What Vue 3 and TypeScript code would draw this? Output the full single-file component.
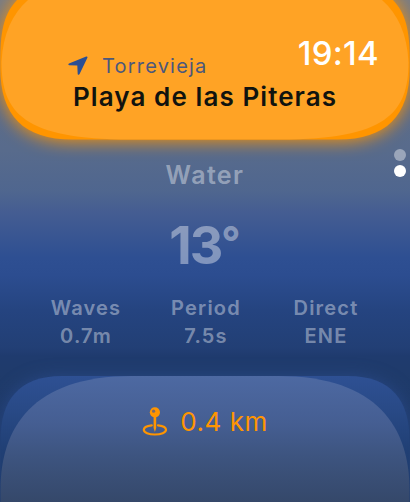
<script setup lang="ts">
interface Metric {
  label: string
  value: string
}

const metrics: Metric[] = [
  { label: 'Waves', value: '0.7m' },
  { label: 'Period', value: '7.5s' },
  { label: 'Direct', value: 'ENE' },
]
</script>

<template>
  <main class="watch">
    <header class="place">
      <svg class="card" viewBox="0 0 410 140" width="410" height="140" aria-hidden="true">
        <path class="card-back" d="M25-8 17 0C5 13 .3 28 .3 60V68C.3 116 24 139.500 72 139.500H338C386 139.500 409.700 116 409.700 68V60C409.700 28 405 13 393 0L385-8Z" />
        <path class="card-front" d="M38-8 28 0C12 14 3 34 1.500 62C1.500 113 24 139.500 130 139.500H280C386 139.500 408.500 113 408.500 62C407 34 398 14 382 0L372-8Z" />
      </svg>
      <div class="place-text">
        <div class="town">
          <svg class="arrow" viewBox="0 0 20 20" width="20" height="20" aria-hidden="true">
            <path d="M18.200 .5 1 7.400C-.1 7.900.1 9.100 1.200 9.200L9.300 9.600 9.700 17.900C9.800 19 11.100 19.200 11.600 18.100L19.400 1.800C19.800.9 19.100.1 18.200.5Z" />
          </svg>
          <span class="town-name">Torrevieja</span>
        </div>
        <h1 class="beach">Playa de las Piteras</h1>
      </div>
      <time class="clock">19:14</time>
    </header>

    <section class="water">
      <h2 class="title">Water</h2>
      <p class="temp">13<span class="degree">°</span></p>
      <dl class="metrics">
        <div v-for="m in metrics" :key="m.label" class="metric">
          <dt>{{ m.label }}</dt>
          <dd>{{ m.value }}</dd>
        </div>
      </dl>
    </section>

    <footer class="distance">
      <svg class="card sea" viewBox="0 0 410 126" width="410" height="126" aria-hidden="true">
        <defs>
          <linearGradient id="seaBack" gradientUnits="userSpaceOnUse" x1="0" y1="0" x2="0" y2="126">
            <stop offset="0" stop-color="#2e5093" />
            <stop offset=".25" stop-color="#294a87" />
            <stop offset=".6" stop-color="#203f74" />
            <stop offset="1" stop-color="#1e3a69" />
          </linearGradient>
          <linearGradient id="seaFront" gradientUnits="userSpaceOnUse" x1="0" y1="0" x2="0" y2="126">
            <stop offset="0" stop-color="#4d69a2" />
            <stop offset=".38" stop-color="#455e92" />
            <stop offset=".64" stop-color="#3d547f" />
            <stop offset="1" stop-color="#35486a" />
          </linearGradient>
        </defs>
        <path class="sea-back" fill="url(#seaBack)" d="M.5 140V64C.5 25 18 0 62 0H348C392 0 409.500 25 409.500 64V140Z" />
        <path fill="url(#seaFront)" d="M.5 140V114C.5 52 32 0 132 0H278C378 0 409.500 52 409.500 114V140Z" />
      </svg>
      <div class="distance-row">
        <svg class="pin" viewBox="0 0 26 30" width="26" height="30" aria-hidden="true">
          <path class="ring" d="M9.800 18.400C5.200 18.900 1.800 20.600 1.800 22.800C1.800 25.500 6.700 27.500 12.900 27.500S24 25.500 24 22.800C24 20.600 20.600 18.900 16 18.400" />
          <path class="fill" d="M11.600 9H14.200V21L12.900 25L11.600 21Z" />
          <circle class="fill" cx="12.900" cy="5.300" r="5.100" />
          <circle class="shine" cx="11.600" cy="4.200" r="1.600" />
        </svg>
        <span class="km">0.4 km</span>
      </div>
    </footer>

    <nav class="pages">
      <i class="dot"></i>
      <i class="dot active"></i>
    </nav>
  </main>
</template>

<style>
body {
  margin: 0;
  overflow: hidden;
}
</style>

<style scoped>
.watch {
  position: relative;
  display: flex;
  flex-direction: column;
  width: 410px;
  height: 502px;
  overflow: hidden;
  font-family: Inter, "Liberation Sans", sans-serif;
  background: linear-gradient(#777c86 0, #5b6c8b 110px, #586b8c 150px, #4f668f 192px, #455d92 212px, #2e4f92 258px, #2c4d90 275px, #254480 310px, #223f75 348px, #1f3b6e 356px, #1f3b6b 376px, #1d3867 502px);
}

.place {
  position: relative;
  z-index: 1;
  box-sizing: border-box;
  display: flex;
  height: 140px;
  padding-left: 68px;
}

.card {
  position: absolute;
  z-index: -1;
  top: 0;
  left: 0;
  overflow: visible;
}

.card-back {
  fill: #ff9500;
  filter: drop-shadow(0 1px 9px #ff9500);
}

.card-front {
  fill: #ffa325;
}

.sea-back {
  filter: drop-shadow(0 0 8px #2d4f9299);
}

.place-text {
  flex: 1;
  padding-top: 54px;
}

.town {
  display: flex;
  align-items: center;
  gap: 14px;
  height: 24px;
}

.arrow {
  fill: #2b4f94;
}

.town-name {
  font-size: 20px;
  line-height: 24px;
  letter-spacing: 1.2px;
  color: #4c587c;
}

.beach {
  margin: 3px 0 0 5px;
  font-size: 26px;
  line-height: 31px;
  font-weight: 600;
  letter-spacing: 1.08px;
  white-space: nowrap;
  color: #11130f;
}

.clock {
  position: absolute;
  right: 31px;
  top: 33px;
  font-size: 33px;
  line-height: 40px;
  font-weight: 500;
  letter-spacing: 0.3px;
  color: #fff;
}

.water {
  display: flex;
  flex-direction: column;
  align-items: center;
  height: 236px;
  color: #ffffff66;
}

.title {
  margin: 20px 0 0;
  font-size: 25px;
  line-height: 30px;
  font-weight: 600;
  letter-spacing: 1.4px;
}

.temp {
  margin: 25px 0 0;
  font-size: 52px;
  line-height: 62px;
  height: 62px;
  font-weight: 700;
  letter-spacing: -2px;
}

.degree {
  font-size: 42px;
  line-height: 1;
  vertical-align: 7px;
  letter-spacing: 0;
}

.metrics {
  display: grid;
  grid-template-columns: repeat(3, 120px);
  margin: 17px 0 0 2px;
  font-size: 20px;
  line-height: 28px;
  font-weight: 600;
  letter-spacing: 1.2px;
  text-align: center;
}

.metric dd {
  margin: 0;
}

.distance {
  position: relative;
  z-index: 0;
  height: 126px;
}

.distance-row {
  display: flex;
  align-items: center;
  justify-content: center;
  gap: 12px;
  padding-top: 30px;
}

.ring {
  fill: none;
  stroke: #ff9500;
  stroke-width: 2.2;
  stroke-linecap: round;
}

.fill {
  fill: #ff9500;
}

.shine {
  fill: #7d6a68;
}

.km {
  font-size: 26px;
  line-height: 32px;
  letter-spacing: 0.5px;
  color: #ff9500;
}

.pages {
  position: absolute;
  z-index: 2;
  top: 149px;
  right: 4px;
  display: grid;
  gap: 4px;
}

.dot {
  width: 12px;
  height: 12px;
  border-radius: 50%;
  background: #ffffff66;
}

.active {
  background: #fff;
}
</style>
